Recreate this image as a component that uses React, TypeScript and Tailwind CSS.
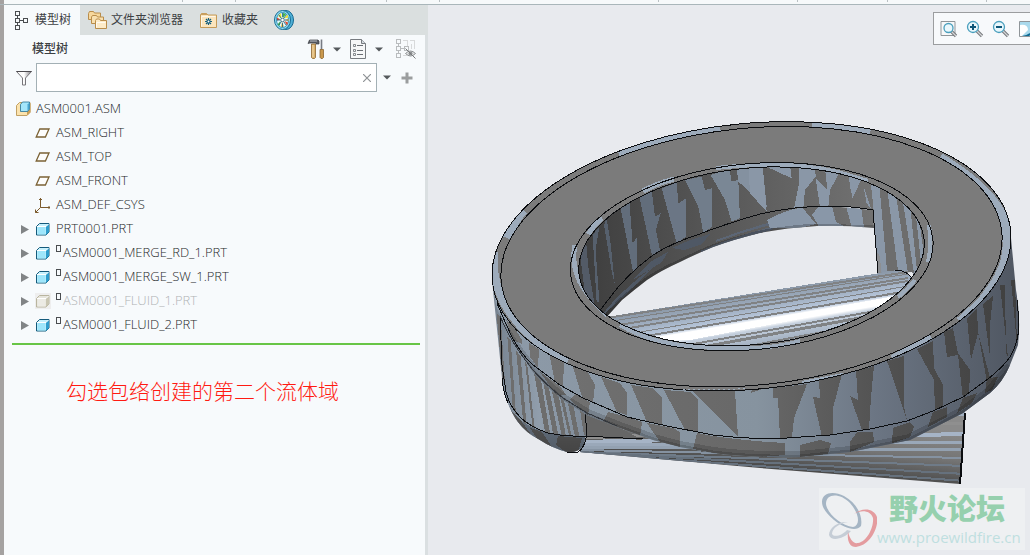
import React, { useState } from 'react';

const EDGE = '#0b0d10';

type NodeKind = 'assembly' | 'plane' | 'csys' | 'part' | 'suppressed';

interface TreeNode {
    name: string;
    kind: NodeKind;
    expandable?: boolean;
    marked?: boolean;
}

const nodes: TreeNode[] = [
    { name: 'ASM0001.ASM', kind: 'assembly' },
    { name: 'ASM_RIGHT', kind: 'plane' },
    { name: 'ASM_TOP', kind: 'plane' },
    { name: 'ASM_FRONT', kind: 'plane' },
    { name: 'ASM_DEF_CSYS', kind: 'csys' },
    { name: 'PRT0001.PRT', kind: 'part', expandable: true },
    { name: 'ASM0001_MERGE_RD_1.PRT', kind: 'part', expandable: true, marked: true },
    { name: 'ASM0001_MERGE_SW_1.PRT', kind: 'part', expandable: true, marked: true },
    { name: 'ASM0001_FLUID_1.PRT', kind: 'suppressed', expandable: true, marked: true },
    { name: 'ASM0001_FLUID_2.PRT', kind: 'part', expandable: true, marked: true },
];

const Caret = () => (
    <svg width="8" height="5" viewBox="0 0 8 5" aria-hidden="true">
        <path d="M0 0.5h8L4 4.5z" fill="#55595c" />
    </svg>
);

const TreeIcon = () => (
    <svg width="14" height="20" viewBox="0 0 14 20" fill="none" stroke="#4a4d50" shapeRendering="crispEdges">
        <path d="M.5 1.500h4v4h-4zM.5 8.500h4v4h-4zM8.500 8.500h4v4h-4zM.5 15.500h4v4h-4zM2.500 5.500v3M2.500 12.500v3M4.500 10.500h4" />
    </svg>
);

const FoldersIcon = () => (
    <svg width="20" height="20" viewBox="0 0 20 20" stroke="#b98d4b" strokeWidth="1">
        <path d="M.5 9.500V3.500l1-2h4l1 1.500h6v6.500z" fill="#f6d79c" />
        <path d="M3.500 13.500V7l1-1.500h4l1 1.500h6v6.500z" fill="#f8e0b0" />
        <path d="M7.500 18.500v-8l1-1.500h3l1 1.500h6v8z" fill="#fdebc8" />
        <path d="M8.500 17.500v-5h9" stroke="#fffaf0" fill="none" />
    </svg>
);

const FavoritesIcon = () => (
    <svg width="20" height="20" viewBox="0 0 20 20">
        <path d="M1.500 17.500V5l1-1.500h5L9 5h8.500v12.500z" fill="#fbe5bd" stroke="#c49a58" />
        <path d="M1.500 5l1-1.500h5L9 5z" fill="#c9a061" />
        <path d="M2.500 16.500V6.500h14" fill="none" stroke="#fff7e8" />
        <path d="M9.500 8v7M6 11.500h7M7 9l5 5M12 9l-5 5" stroke="#145f7d" strokeWidth="1.200" />
        <circle cx="9.500" cy="11.500" r="1" fill="#fff" />
    </svg>
);

const GlobeIcon = () => (
    <svg width="20" height="20" viewBox="0 0 20 20">
        <ellipse cx="12" cy="10" rx="7.500" ry="9.500" fill="#4fb0d6" stroke="#16688f" />
        <ellipse cx="8.500" cy="10" rx="8" ry="9.500" fill="#8fdcf2" stroke="#176a92" />
        <ellipse cx="8.500" cy="10" rx="6" ry="7.500" fill="#e3f8fc" stroke="#1c7ba4" strokeWidth=".8" />
        <path d="M7.500 8.500L4 6l3-3zM10 8.500l3.500-4 .8 3z" fill="#f5e32c" />
        <path d="M9 8V3l3 1zM6.500 11l-3 3.500L5.500 16z" fill="#3fb04a" />
        <path d="M6.500 9.500L3 7.500v3zM10.500 11l3.500 1.500-1 3z" fill="#e8482c" />
        <path d="M8 12l-1 5 3-.5zM11 10l3.500-1v2z" fill="#f5b02c" />
        <path d="M8.500 3v4M8.500 13v4M3 10h3M11 10h3M5 5l2 3M12 5l-2 3M5 15l2-3M12 15l-2-3" stroke="#155d80" strokeWidth=".8" />
        <circle cx="8.500" cy="10" r="1.800" fill="#fff" stroke="#1a5070" strokeWidth=".8" />
    </svg>
);

const ToolsIcon = () => (
    <svg width="18" height="22" viewBox="0 0 18 22">
        <path d="M1 5.500L2.500 2H11l1 1v3H9V5H3z" fill="#5b5f66" stroke="#3b3e44" strokeWidth=".7" />
        <path d="M3 3h7" stroke="#b9bdc4" />
        <path d="M4.500 6h4v13.500l-1 1h-2l-1-1z" fill="#d9b06c" stroke="#8a6430" strokeWidth=".8" />
        <path d="M6 7v12" stroke="#f4dcae" />
        <path d="M14.500 1.500v10" stroke="#777b82" strokeWidth="1.600" />
        <path d="M13 11.500h3.500v8l-1 1h-1.500l-1-1z" fill="#c9984d" stroke="#8a6430" strokeWidth=".8" />
    </svg>
);

const SettingsListIcon = () => (
    <svg width="18" height="22" viewBox="0 0 18 22">
        <path d="M1.500 1.500h11l4 4v15h-15z" fill="#f6f7f8" stroke="#777b80" />
        <path d="M12.500 1.500v4h4" fill="#d4dadf" stroke="#777b80" />
        <path d="M8 7.500h6M8 12.500h6M8 16.500h6" stroke="#6a6e74" />
        <path d="M4.500 6.500h2v2h-2zM4.500 11.500h2v2h-2zM4.500 15.500h2v2h-2z" fill="none" stroke="#6a6e74" strokeWidth=".8" />
    </svg>
);

const HiddenTreeIcon = () => (
    <svg width="22" height="22" viewBox="0 0 22 22" fill="none" stroke="#b9bcbe">
        <g shapeRendering="crispEdges">
            <path d="M1.500 1.500h4v4h-4zM1.500 8.500h4v4h-4zM1.500 15.500h4v4h-4zM3.500 5.500v3M3.500 12.500v3M5.500 10.500h4" />
            <path d="M9.500 8.500h4v4h-4z" />
            <path d="M7.500 2.500h5v5M14.500 2.500h5v8M7.500 17.500h4M16.500 5.500v5" stroke="#d8dadb" />
        </g>
        <path d="M10.500 15.500q5-5 10 0q-5 5-10 0z" stroke="#8e9193" fill="#e4e6e7" />
        <circle cx="15.500" cy="15.500" r="2" fill="#8e9193" stroke="none" />
        <path d="M10.500 10.500l10 10" stroke="#77797b" />
    </svg>
);

const FunnelIcon = () => (
    <svg width="16" height="16" viewBox="0 0 16 16">
        <defs>
            <linearGradient id="funnel" x1="0" x2="1">
                <stop offset="0" stopColor="#f4f4f4" />
                <stop offset=".5" stopColor="#fff" />
                <stop offset="1" stopColor="#7d7a80" />
            </linearGradient>
        </defs>
        <path d="M.5 1.500h15L9.500 8v7h-3V8z" fill="url(#funnel)" stroke="#77757a" />
        <path d="M.5 1.500h15" stroke="#4b494e" />
    </svg>
);

const NodeIcon = ({ kind }: { kind: NodeKind }) => {
    if (kind === 'assembly') {
        return (
            <svg width="16" height="16" viewBox="0 0 16 16">
                <path d="M.5 4.500l3-3h10.500v10l-3 3H.5z" fill="#fbe3ae" stroke="#c1a063" />
                <path d="M11 14.500l3.500-3.500V2L11 5z" fill="#c99f57" />
                <path d="M4.500 3.500l2-2.500h7v7l-2 2.500h-7z" fill="#a4e6fb" stroke="#246e93" strokeWidth=".8" />
                <path d="M11.500 10V3.500L13.500 1.500v6.500z" fill="#4aa7d2" />
            </svg>
        );
    }
    if (kind === 'plane') {
        return (
            <svg width="16" height="16" viewBox="0 0 16 16">
                <path d="M4.800 4h9.200l-3.600 8H1.200z" fill="#fdfdfc" stroke="#7b6235" strokeWidth="1.300" />
            </svg>
        );
    }
    if (kind === 'csys') {
        return (
            <svg width="16" height="16" viewBox="0 0 16 16" fill="none" stroke="#7b5a2c">
                <path d="M5.500 10.500V1M5.500 10.500h9.500M5.500 10.500l-5 5" />
                <path d="M4 2.500h3M14 9v3M.5 12.500v3h3" />
            </svg>
        );
    }
    const grey = kind === 'suppressed';
    return (
        <svg width="16" height="16" viewBox="0 0 16 16" className={grey ? 'bg-[#eeeeee]' : ''}>
            <path d="M1.500 5.500l3-3h9.500v8.500l-3 3H1.500z" fill={grey ? '#e6e5dc' : '#c7f1fd'} stroke={grey ? '#b9b59f' : '#155a7b'} strokeLinejoin="round" />
            <path d="M11 14V5.500l3-3V11z" fill={grey ? '#c9c6b2' : '#2f9dcc'} />
            <path d="M2.500 6h8v7.500h-8z" fill={grey ? '#ecebe4' : '#9fe6fb'} />
            <path d="M2 5.500h9l2.500-2.500" fill="none" stroke="#fff" />
        </svg>
    );
};

const Magnifier = ({ type }: { type: 'fit' | 'in' | 'out' }) => (
    <svg width="18" height="18" viewBox="0 0 18 18">
        {type === 'fit' && <path d="M1 1.500h14v14H1z" fill="#f7f8f9" stroke="#8f9599" />}
        <path d="M11 11l5 5" stroke="#74777a" strokeWidth="3.200" />
        <path d="M11 11l5 5" stroke="#d5d7d9" strokeWidth="1.200" />
        <circle cx={type === 'fit' ? 8.5 : 7} cy={type === 'fit' ? 8 : 7} r={type === 'fit' ? 4.5 : 5.5} fill="#e9f7fc" stroke="#4a9fbd" strokeWidth="1.300" />
        {type !== 'fit' && <path d="M4 7h6" stroke="#0e5678" strokeWidth="2" />}
        {type === 'in' && <path d="M7 4v6" stroke="#0e5678" strokeWidth="2" />}
    </svg>
);

const RepaintIcon = () => (
    <svg width="18" height="18" viewBox="0 0 18 18">
        <path d="M1.500 1.500h16v15h-16z" fill="#a9d9ec" stroke="#8f9599" />
        <path d="M2 5q8-1 8 5l-6 6H2z" fill="#fff" />
        <path d="M4 16q9-1 14-10v4l-7 6z" fill="#0f6a93" />
    </svg>
);

// start height on the left, end height on the right, thickness
const midStripes = [
    [319, 272, 2],
    [323, 274, 1],
    [328, 278, 2],
    [333, 281, 2],
    [339, 286, 1],
    [344, 291, 2],
    [361, 305, 2],
    [366, 309, 3],
    [374, 316, 2],
    [380, 322, 3],
];

const baseStripes = [
    [426, 414, 4, '#a1afc0'],
    [438, 423, 3, '#8f8f8f'],
    [442, 434, 4, '#a6b4c6'],
    [445, 442, 3, '#9aa8b9'],
    [447, 450, 3, '#93a1b1'],
    [450, 458, 2, '#8592a1'],
    [452, 466, 2, '#6f7b88'],
    [452, 474, 2, '#66717d'],
    [453, 481, 2, '#66717d'],
];

const Model = () => (
    <svg viewBox="428 5 602 550" className="block w-full" role="img" aria-label="ASM0001" shapeRendering="crispEdges">
        <defs>
            <linearGradient id="wallLight" gradientUnits="userSpaceOnUse" x1="495" x2="1020" y1="0" y2="0">
                <stop offset="0" stopColor="#8d9aa8" />
                <stop offset=".5" stopColor="#86939f" />
                <stop offset=".72" stopColor="#6c7684" />
                <stop offset="1" stopColor="#4f5661" />
            </linearGradient>
            <linearGradient id="wallDark" gradientUnits="userSpaceOnUse" x1="495" x2="1020" y1="0" y2="0">
                <stop offset="0" stopColor="#737373" />
                <stop offset=".5" stopColor="#686868" />
                <stop offset=".75" stopColor="#515151" />
                <stop offset="1" stopColor="#3f3f3f" />
            </linearGradient>
            <linearGradient id="boreLight" gradientUnits="userSpaceOnUse" x1="578" x2="880" y1="0" y2="0">
                <stop offset="0" stopColor="#4d545f" />
                <stop offset=".35" stopColor="#6c7684" />
                <stop offset="1" stopColor="#8f9bab" />
            </linearGradient>
            <linearGradient id="boreDark" gradientUnits="userSpaceOnUse" x1="578" x2="880" y1="0" y2="0">
                <stop offset="0" stopColor="#3d3d3d" />
                <stop offset=".4" stopColor="#545454" />
                <stop offset="1" stopColor="#737373" />
            </linearGradient>
            <linearGradient id="midTube" gradientUnits="userSpaceOnUse" x1="750" y1="292" x2="760" y2="351">
                <stop offset="0" stopColor="#8794a3" />
                <stop offset=".3" stopColor="#a6b5c8" />
                <stop offset=".44" stopColor="#b9c8dc" />
                <stop offset=".49" stopColor="#fff" />
                <stop offset=".58" stopColor="#fff" />
                <stop offset=".64" stopColor="#c4cfdd" />
                <stop offset="1" stopColor="#93a1b3" />
            </linearGradient>
            <linearGradient id="baseTube" gradientUnits="userSpaceOnUse" x1="800" y1="415" x2="794" y2="474">
                <stop offset="0" stopColor="#8a8a8a" />
                <stop offset=".5" stopColor="#747474" />
                <stop offset="1" stopColor="#444" />
            </linearGradient>
            <linearGradient id="spout" gradientUnits="userSpaceOnUse" x1="493" x2="586" y1="0" y2="0">
                <stop offset="0" stopColor="#76828f" />
                <stop offset=".5" stopColor="#919eac" />
                <stop offset="1" stopColor="#7f8b99" />
            </linearGradient>
            <linearGradient id="spoutRound" x1="0" x2="0" y1="0" y2="1">
                <stop offset="0" stopColor="#000" stopOpacity="0" />
                <stop offset="1" stopColor="#000" stopOpacity=".3" />
            </linearGradient>
            <clipPath id="rim">
                <ellipse cx="751.500" cy="256.300" rx="260.400" ry="132.900" transform="rotate(-5.600 751.500 256.300)" />
            </clipPath>
            <clipPath id="bore">
                <ellipse cx="751.500" cy="256.400" rx="173.400" ry="88.300" transform="rotate(-5.600 751.500 256.400)" />
            </clipPath>
            <clipPath id="boreWall">
                <path d="M570 330L606 318Q600 312 608 300Q626 275 653 255Q672 243 697 235Q725 224 760 214Q795 206 830 206Q850 206 873 210L878 273L912 272L935 300V150H560z" />
            </clipPath>
            <clipPath id="boreRound">
                <path d="M585 330L608 300Q626 275 653 255Q672 243 697 235Q725 224 760 214Q795 206 830 206L873 210L874 228Q845 225 817 226Q785 228 760 233Q735 239 713 247Q696 254 680 262Q662 270 647 280Q634 290 622 300L604 320z" />
            </clipPath>
            <clipPath id="skirt">
                <path d="M492 270L495 300Q497 310 500 315Q512 343 533 372Q545 386 563 400L587 415L617 427L653 440L680 447L713 453Q750 458 800 457L850 452L910 440L963 413L990 393Q1003 382 1010 365L1018 345Q1021 318 1016 290L1011 238L750 120z" />
            </clipPath>
            <clipPath id="tubeEnd">
                <path d="M587 436L650 425L965 400V415L960 484L760 468L580 452z" />
            </clipPath>
            <clipPath id="spoutShape">
                <path d="M492 280L502 378Q503 392 508 403Q512 414 518 422Q526 433 540 440Q552 448 567 452Q578 453 583 446Q587 438 586 412L540 360z" />
            </clipPath>
        </defs>

        {/* lower tube */}
        <g clipPath="url(#tubeEnd)">
            <path d="M570 400H970V490H570z" fill="url(#baseTube)" />
            {baseStripes.map(([left, right, size, color]) => (
                <path key={right} d={`M580 ${left}L965 ${right}`} stroke={`${color}`} strokeWidth={size} />
            ))}
        </g>
        <path d="M965 413L960 484" stroke={EDGE} strokeWidth="2" />
        <path d="M585 410L643 440L583 436z" fill="#666" />

        {/* left body under the ring */}
        <g clipPath="url(#spoutShape)">
            <path d="M490 270H590V455H490z" fill="url(#spout)" />
            <g transform="translate(480 290) scale(0.3333)" fill="#6d6d6d">
                <path d="M50 70L62 80L75 280L66 260zM82 140L92 150L108 375L98 350z" />
                <path d="M108 180L122 200L140 410L130 400zM135 215L142 225L165 420L158 415z" />
                <path d="M162 250L182 265L210 430L195 425zM188 270L205 285L235 435L220 434z" />
                <path d="M215 300L236 315L258 440H246zM240 320L252 330L275 440H268zM262 330L280 345L298 440H285zM300 360L320 380V436H312z" />
                <path d="M146 300L150 305L152 340L147 338zM205 350L209 352L212 372L207 370z" />
            </g>
            <path d="M502 390L509 405Q516 424 548 433L586 437V455H505z" fill="#73808f" />
            <path d="M510 410L520 419L532 436L520 432zM530 428L542 432L552 447L540 443zM558 436L582 438L578 452L566 452L556 445z" fill="#606060" />
            <path d="M502 390L509 405Q516 424 548 433L586 437V455H505z" fill="url(#spoutRound)" />
        </g>
        <path d="M500 315L502 365L506 392Q509 405 520 417Q530 427 548 433Q565 437 583 436L643 439M502 378Q503 392 508 403M585 412L587 433Q585 448 578 452L567 452" fill="none" stroke={EDGE} />

        {/* outer wall */}
        <g clipPath="url(#skirt)">
            <path d="M490 230H1025V462H490z" fill="url(#wallLight)" />
            <g fill="url(#wallDark)">
                <path d="M506 320L513 325L522 340V344L513 340zM529 343L539 349L538 368L530 357zM549 353L564 361L563 387L555 382z" />
                <path d="M573 367L588 372L595 385L593 402L582 397zM601 377L620 383L627 393V415L617 412zM631 385L652 388L662 398V425L647 422z" />
                <path d="M664 390L690 392L698 400V433L685 430zM692 391L735 391L738 436zM752 389L775 385L751 393z" />
                <path d="M773 388L807 384L794 418L792 437L783 443L780 438L778 398H773zM819 380L842 374L833 408V436L822 437L813 397L820 398z" />
                <path d="M856 371L874 366L871 397L869 429L862 430L850 396L858 400zM887 361L904 356V407L907 420z" />
                <path d="M917 349L933 341L934 368L943 385V407L935 412L934 380zM944 332L953 328L958 353L970 370L969 397L963 399L958 355L947 357z" />
                <path d="M967 318L977 309L978 333L971 360zM983 304L993 296L990 325V357zM1000 285H1005L1006 353L1008 357zM1011 280H1015L1017 345zM978 332L990 378L987 382z" />
            </g>
            <path d="M500 315Q511 343 533 365L560 385L583 398L627 417L667 426L713 435Q750 440 787 438L830 435L870 429L907 421L933 411L963 397L988 379Q1006 365 1010 357V470H490z" fill="url(#wallLight)" />
            <g fill="url(#wallDark)">
                <path d="M540 372L560 386L566 395L556 395zM575 394L590 402L588 415L570 400zM608 412L628 417L642 422L640 437L617 428L603 422z" />
                <path d="M647 423L673 428L680 432V447L660 442zM697 433Q730 440 785 443V455L750 458L713 453L693 449z" />
                <path d="M800 445L820 440L831 443L828 454L800 457zM850 442L857 432L873 432L874 442L850 452zM893 428L910 422L914 427L910 437L892 443z" />
                <path d="M933 412L947 407V417L928 427zM963 398L977 393L972 403L957 413zM987 378L998 377L992 390L985 393z" />
            </g>
            {/* shade of the rounded lower edge */}
            <path d="M500 326Q512 348 533 373Q545 387 563 401L587 416L617 428L653 441L680 448L713 454Q750 459 800 458L850 453L910 441L963 414L990 394L1012 368" fill="none" stroke="#000" strokeWidth="14" strokeOpacity=".14" />
            <path d="M500 326Q512 348 533 373Q545 387 563 401L587 416L617 428L653 441L680 448L713 454Q750 459 800 458L850 453L910 441L963 414L990 394L1012 368" fill="none" stroke="#000" strokeWidth="7" strokeOpacity=".14" />
        </g>
        <path d="M497 303Q501 313 511 335Q520 353 533 365L560 385L583 398L627 417L667 426L713 435Q750 440 787 438L830 435L870 429L907 421L933 411L963 397L988 379Q1004 366 1010 357Q1019 342 1019 322L1017 300" fill="none" stroke={EDGE} />
        <path d="M500 316Q511 343 533 370Q545 384 563 398L587 413L617 426" fill="none" stroke="#33373d" />

        {/* bevel and flat face */}
        <ellipse cx="751.500" cy="256.300" rx="260.400" ry="132.900" transform="rotate(-5.600 751.500 256.300)" fill="#7b7b7b" />
        <g stroke="#9dabbb" strokeWidth="10" fill="none" clipPath="url(#rim)">
            <path d="M618 152Q665 135 720 127M812 126Q845 126 870 133M523 210Q512 223 507 238" />
            <path d="M494 252Q491 282 508 310Q523 333 552 353L568 361" strokeWidth="8" />
            <path d="M940 158Q985 185 1000 212Q1018 250 994 285L982 302L960 322" />
            <path d="M931 337L892 358M843 376L802 384" strokeWidth="6" />
        </g>
        <ellipse cx="751.500" cy="256.300" rx="260.400" ry="132.900" transform="rotate(-5.600 751.500 256.300)" fill="none" stroke={EDGE} />
        <ellipse cx="751.500" cy="256.700" rx="251.500" ry="128.500" transform="rotate(-5.600 751.500 256.700)" fill="#7b7b7b" stroke={EDGE} />
        <path d="M683 389L735 389L745 388" fill="none" stroke="#9dabbb" strokeDasharray="2 3" />
        <ellipse cx="751.600" cy="256.700" rx="178" ry="90.800" transform="rotate(-5.600 751.600 256.700)" fill="none" stroke="#7b7b7b" strokeWidth="5" />
        <g stroke="#9dabbb" strokeWidth="5" fill="none">
            <path d="M643 191Q658 183 674 179M588 234Q594 225 602 218M575 245Q571 264 580 282Q590 300 607 315" />
            <path d="M620 325Q655 347 720 348Q770 350 800 341M716 168Q790 160 838 172L868 181M929 225Q932 245 928 262M915 280Q907 290 898 297" strokeWidth="4" />
        </g>

        {/* inside of the ring */}
        <g clipPath="url(#bore)">
            <path d="M560 150H940V360H560z" fill="#e8eaee" />
            <g clipPath="url(#boreRound)">
                <path d="M580 200H880V335H580z" fill="url(#boreDark)" />
                <path d="M600 318Q612 300 640 277L652 268L640 281L622 298zM634 279L650 262L668 252L662 262L646 272zM672 248L690 240L710 234L702 244L684 250z" fill="#4f5865" />
                <path d="M700 251Q735 236 775 226L772 230Q735 239 702 252zM716 240Q745 229 775 221V224Q745 231 716 242zM640 287Q665 267 700 254L700 256Q668 270 642 287z" fill="#5c6675" />
                <path d="M767 220Q790 208 802 208L806 212L816 224L800 228L770 228zM819 206H832L836 222L848 228H820L812 215zM846 206H861L864 228H852z" fill="#8997a8" />
                <path d="M604 322L622 302Q634 292 647 282Q662 272 680 264Q696 256 713 249Q735 241 760 235Q785 230 817 228L874 230" fill="none" stroke="#000" strokeOpacity=".2" strokeWidth="9" />
            </g>
            <g clipPath="url(#boreWall)">
                <path d="M560 150H940V340H560z" fill="url(#boreDark)" />
                <g transform="translate(480 110) scale(0.3333)">
                    <path d="M300 430L318 390L325 470L345 590H320z" fill="#535b67" />
                    <path d="M338 375L358 350L347 420L358 575H350zM372 345L380 325L392 400L404 520L396 490z" fill="#56606d" />
                    <path d="M422 295L448 270L458 400L472 380L472 490L460 490zM478 260L515 240L525 320L542 310L528 360L542 430L520 455z" fill="#626d7b" />
                    <path d="M545 235L590 218L595 280L618 265L618 380L590 400z" fill="#6b7685" />
                    <path d="M615 210L665 200L675 240L695 235L697 350L670 368L655 290z" fill="#717d8b" />
                    <path d="M692 195L748 175L755 215L775 210L780 325L755 335L735 270z" fill="#7a8795" />
                    <path d="M770 170H848L860 290L775 215z" fill="#8491a0" />
                </g>
                <g transform="translate(750 110) scale(0.3333)" fill="#8a97a7">
                    <path d="M-5 165H38L50 305L0 250zM52 165H120L125 205L60 175zM145 165H195L197 200L165 240L160 295H132L148 215z" />
                    <path d="M225 175L270 185L240 240L235 292H210L197 205L232 238zM296 190L335 205L308 265L300 230zM340 225L365 300L350 280z" />
                    <path d="M362 215L420 215L540 330V500H385L372 310z" />
                    <path d="M388 225L412 240L445 490H412zM438 255L458 270L492 490H474zM480 285L496 300L515 475L502 490zM508 330L525 350V460z" fill="#6d6d6d" />
                    <path d="M372 310L378 420L390 440L395 495H384z" fill="#8d8f92" />
                </g>
            </g>
            <path d="M585 330L608 300Q626 275 653 255Q672 243 697 235Q725 224 760 214Q795 206 830 206Q850 206 873 210L878 273" fill="none" stroke={EDGE} />

            {/* tube crossing the opening */}
            <path d="M600 318L880 273Q893 269 902 271Q910 274 915 282V360H600z" fill="url(#midTube)" />
            {midStripes.map(([left, right, size]) => (
                <path key={left} d={`M600 ${left}L908 ${right}`} stroke="#808284" strokeWidth={size} />
            ))}
            <path d="M648 341L890 297L884 303L690 340z" fill="#fff" />
            <path d="M895 270Q908 270 914 281" fill="none" stroke={EDGE} />
        </g>
        <ellipse cx="751.700" cy="256.700" rx="182" ry="92.900" transform="rotate(-5.600 751.700 256.700)" fill="none" stroke={EDGE} />
        <ellipse cx="751.500" cy="256.400" rx="173.400" ry="88.300" transform="rotate(-5.600 751.500 256.400)" fill="none" stroke={EDGE} />
    </svg>
);

const Watermark = () => (
    <div className="absolute right-[5px] bottom-[5px] flex h-[62px] w-[206px] items-center bg-[#eef0f2]">
        <svg width="58" height="60" viewBox="0 0 58 60" className="shrink-0" aria-hidden="true">
            <path fillRule="evenodd" fill="#a5b5c4" d="M3 13C3 3 15 2 25 7C38 14 44 27 42 37C37 43 25 39 15 31C8 25 3 19 3 13zM7 15C8 24 22 37 34 38C42 36 40 24 31 14C21 4 7 4 7 15z" />
            <path fillRule="evenodd" fill="#c5cdd6" d="M29 33C20 32 10 38 10 46C12 53 25 50 32 42L28 41C24 46 15 49 13 45C13 39 21 34 29 33z" />
            <path fillRule="evenodd" fill="#e49c9f" d="M35 25C43 18 55 19 58 28C60 40 50 57 37 58C30 58 28 51 29 43C31 50 34 55 39 54C48 53 55 38 54 29C51 21 42 21 35 25z" />
        </svg>
        <div className="flex flex-col whitespace-nowrap">
            <span className="pl-3 text-[29px] leading-9 font-black text-[#96d0ae]">野火论坛</span>
            <span className="text-[15px] leading-5 text-[#bfdfe0]">www.proewildfire.cn</span>
        </div>
    </div>
);

const TopStrip = () => (
    <div className="flex h-[5px] w-full overflow-hidden border-b border-[#a9b6ba] bg-[#f6f9fa]">
        <span className="h-1 w-1 shrink-0 bg-[#a5a2a1]" />
        <span className="h-0.5 w-[179px] shrink-0 border-r border-[#b9c0c3]" />
        <span className="h-0.5 w-[53px] shrink-0 border-r border-[#b9c0c3]" />
        <span className="h-0.5 w-[151px] shrink-0 border-r border-[#b9c0c3]" />
        <span className="h-0.5 w-[53px] shrink-0 border-r border-[#b9c0c3]" />
        <span className="h-0.5 w-[219px] shrink-0 border-r border-[#b9c0c3]" />
        <span className="h-0.5 w-[139px] shrink-0 border-r border-[#b9c0c3]" />
        <span className="h-0.5 w-[90px] shrink-0 border-r border-[#b9c0c3]" />
        <span className="h-0.5 w-[99px] shrink-0 border-r border-[#b9c0c3]" />
    </div>
);

export default function App() {
    const [filter, setFilter] = useState('');
    const [selected, setSelected] = useState<string | null>(null);

    return (
        <div className="flex min-h-screen flex-col overflow-hidden bg-[#e8eaee] font-['Open_Sans','Noto_Sans_CJK_SC',sans-serif] text-[#3c4043]">
            <TopStrip />
            <div className="flex flex-1">
                <div className="w-1 shrink-0 bg-[#a5a2a1]" />
                <aside className="flex w-[424px] shrink-0 flex-col border-r-[3px] border-[#dadfe1] bg-[#f7fafc]">
                    <nav className="-mr-[3px] flex h-[30px] bg-[#dadfdf] text-xs">
                        <button type="button" className="flex items-center gap-1.5 bg-[#f7fafc] pr-[9px] pl-[11px]">
                            <TreeIcon />
                            模型树
                        </button>
                        <button type="button" className="flex items-center gap-[3px] px-2">
                            <FoldersIcon />
                            文件夹浏览器
                        </button>
                        <button type="button" className="flex items-center gap-[3px] px-2">
                            <FavoritesIcon />
                            收藏夹
                        </button>
                        <button type="button" className="px-2" aria-label="资源">
                            <GlobeIcon />
                        </button>
                    </nav>

                    <div className="flex h-7 items-center gap-2 pr-2 pl-7">
                        <h2 className="flex-1 text-xs font-medium">模型树</h2>
                        <button type="button" aria-label="工具"><ToolsIcon /></button>
                        <button type="button" aria-label="工具菜单"><Caret /></button>
                        <button type="button" aria-label="设置"><SettingsListIcon /></button>
                        <button type="button" aria-label="设置菜单"><Caret /></button>
                        <button type="button" aria-label="显示" className="ml-1"><HiddenTreeIcon /></button>
                    </div>

                    <div className="flex items-center pr-3 pl-3">
                        <FunnelIcon />
                        <div className="ml-1 flex h-[29px] flex-1 items-center border border-[#a3b0b5] bg-white">
                            <input
                                type="text"
                                aria-label="过滤"
                                value={filter}
                                onChange={(e) => setFilter(e.target.value)}
                                className="h-full min-w-0 flex-1 px-2 text-[13px] outline-none"
                            />
                            <button type="button" aria-label="清除" className="px-[5px]" onClick={() => setFilter('')}>
                                <svg width="8" height="8" viewBox="0 0 8 8" stroke="#8f9396" strokeWidth="1.200">
                                    <path d="M0 0l8 8M8 0L0 8" />
                                </svg>
                            </button>
                        </div>
                        <button type="button" aria-label="过滤菜单" className="ml-1.5"><Caret /></button>
                        <button type="button" aria-label="添加" className="ml-2.5">
                            <svg width="12" height="12" viewBox="0 0 12 12" stroke="#9b9d9e" strokeWidth="3">
                                <path d="M6 .5v11M.5 6h11" />
                            </svg>
                        </button>
                    </div>

                    <ul className="pt-[5px] pl-3 text-[13px] font-light text-[#26292b]">
                        {nodes.map((node) => (
                            <li key={node.name} className="flex h-6 items-center">
                                {node.kind !== 'assembly' && (
                                    <span className="flex w-[19px] pl-[5px]">
                                        {node.expandable && (
                                            <svg width="8" height="9" viewBox="0 0 8 9">
                                                <path d="M0 0l8 4.500L0 9z" fill="#818486" />
                                            </svg>
                                        )}
                                    </span>
                                )}
                                <NodeIcon kind={node.kind} />
                                {node.marked && <span className="mt-1 ml-[5px] h-[7px] w-[5px] self-start border border-[#4a4d50]" />}
                                <button
                                    type="button"
                                    onClick={() => setSelected(node.name)}
                                    aria-pressed={selected === node.name}
                                    className={`${node.marked ? 'ml-0.5' : node.kind === 'assembly' ? 'ml-1' : 'ml-[5px]'} ${node.kind === 'suppressed' ? 'text-[#b0b3b5]' : ''}`}
                                >
                                    {node.name}
                                </button>
                            </li>
                        ))}
                    </ul>

                    <div className="mt-1.5 mr-[5px] ml-2 h-0.5 bg-[#68c546]" />
                    <p className="mt-8 pl-[62px] text-[21px] leading-7 font-light text-[#ff1a12]">勾选包络创建的第二个流体域</p>
                </aside>

                <main className="relative min-w-0 flex-1 overflow-hidden">
                    <Model />
                    <div className="absolute top-[7px] -right-3 flex h-[33px] w-[109px] items-center gap-2 border border-[#9b9d9f] bg-[#f7f9fb] pl-1.5">
                        <button type="button" aria-label="重新调整"><Magnifier type="fit" /></button>
                        <button type="button" aria-label="放大"><Magnifier type="in" /></button>
                        <button type="button" aria-label="缩小"><Magnifier type="out" /></button>
                        <button type="button" aria-label="重画"><RepaintIcon /></button>
                    </div>
                    <Watermark />
                </main>
            </div>
        </div>
    );
}
